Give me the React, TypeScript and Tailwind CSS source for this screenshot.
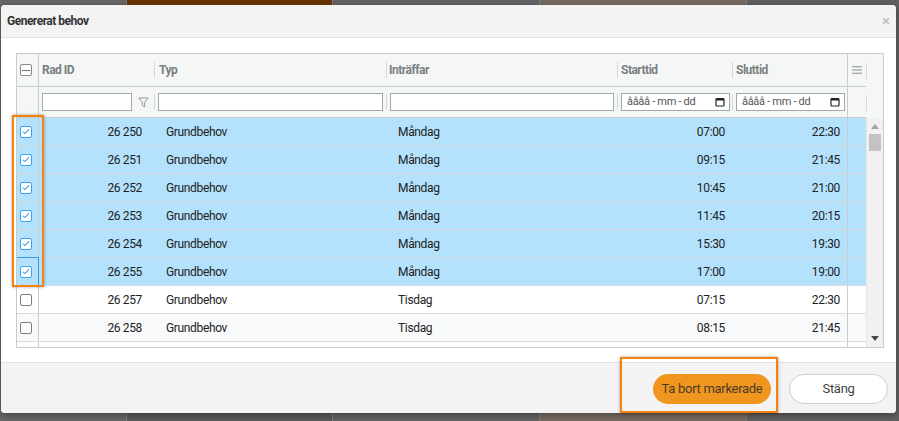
import React from "react";

interface Row {
  id: string;
  day: string;
  start: string;
  end: string;
  selected: boolean;
}

const rows: Row[] = [
  { id: "26 250", day: "Måndag", start: "07:00", end: "22:30", selected: true },
  { id: "26 251", day: "Måndag", start: "09:15", end: "21:45", selected: true },
  { id: "26 252", day: "Måndag", start: "10:45", end: "21:00", selected: true },
  { id: "26 253", day: "Måndag", start: "11:45", end: "20:15", selected: true },
  { id: "26 254", day: "Måndag", start: "15:30", end: "19:30", selected: true },
  { id: "26 255", day: "Måndag", start: "17:00", end: "19:00", selected: true },
  { id: "26 257", day: "Tisdag", start: "07:15", end: "22:30", selected: false },
  { id: "26 258", day: "Tisdag", start: "08:15", end: "21:45", selected: false },
];

const font = { fontFamily: "Roboto, 'Noto Sans', sans-serif" };

function Checkbox({ checked }: { checked: boolean }) {
  if (!checked) {
    return <span className="block h-[12px] w-[12px] rounded-[2px] border border-[#7d7d7d] bg-white" />;
  }
  return (
    <span className="flex h-[12px] w-[12px] items-center justify-center rounded-[2px] border border-[#3d9ff0] bg-white">
      <svg width="8" height="7" viewBox="0 0 8 7" fill="none">
        <path d="M1 3.8 L3 5.6 L7 1.2" stroke="#3d9ff0" strokeWidth="1.1" />
      </svg>
    </span>
  );
}

function Sep() {
  return <span className="h-[16px] w-px shrink-0 bg-[#d6d9db]" />;
}

function DateBox() {
  return (
    <div className="flex h-[18px] w-[109px] items-center justify-between border border-[#9ea8ad] bg-white pl-[5px] pr-[4px] text-[11px] tracking-[-0.3px] text-[#555]">
      <span>åååå - mm - dd</span>
      <svg width="10" height="10" viewBox="0 0 10 10" fill="none">
        <rect x="1" y="1.5" width="8" height="7.5" rx="1" stroke="#222" strokeWidth="1.2" />
        <rect x="1" y="1.5" width="8" height="2" fill="#222" />
      </svg>
    </div>
  );
}

function DataRow({ row, index }: { row: Row; index: number }) {
  const bg = row.selected ? "bg-[#b4e1fc]" : index % 2 === 1 ? "bg-[#f8f9fb]" : "bg-white";
  const focused = index === 5;
  return (
    <div className={`flex h-[28px] shrink-0 border-b border-[#d9dcdf] text-[12px] tracking-[-0.35px] text-[#222] ${bg}`}>
      <div className="relative flex w-[22px] shrink-0 items-center border-r border-[#c6ccd0] pl-[3px]">
        <Checkbox checked={row.selected} />
        {focused && <div className="absolute -bottom-px -left-px -right-px -top-px border border-[#3b98e4]" />}
      </div>
      <div className="flex w-[115px] shrink-0 items-center justify-end pr-[12px]">{row.id}</div>
      <div className="flex w-[232px] shrink-0 items-center pl-[12px]">Grundbehov</div>
      <div className="flex w-[231px] shrink-0 items-center pl-[12px]">{row.day}</div>
      <div className="flex w-[115px] shrink-0 items-center justify-end pr-[7px]">{row.start}</div>
      <div className="flex w-[115px] shrink-0 items-center justify-end pr-[7px]">{row.end}</div>
      <div className="w-[19px] shrink-0 border-l border-[#c6ccd0]" />
    </div>
  );
}

function Grid() {
  return (
    <div className="flex h-[295px] w-[868px] flex-col border border-[#c6ccd0] bg-white">
      {/* header + filter */}
      <div className="flex shrink-0 bg-[#f5f6f6]">
        <div className="flex w-[849px] flex-col">
          <div className="flex h-[33px] border-b border-[#c6ccd0] text-[12px] font-bold tracking-[-0.5px] text-[#7b7f82]">
            <div className="flex w-[22px] shrink-0 items-center border-r border-[#c6ccd0] pl-[3px]">
              <span className="flex h-[12px] w-[12px] items-center justify-center rounded-[2px] border border-[#8a8a8a] bg-white">
                <span className="h-px w-[8px] bg-[#777]" />
              </span>
            </div>
            <div className="flex w-[115px] shrink-0 items-center pl-[3px]">Rad ID</div>
            <div className="flex w-[232px] shrink-0 items-center gap-[4px]">
              <Sep />
              Typ
            </div>
            <div className="flex w-[231px] shrink-0 items-center gap-[2px]">
              <Sep />
              Inträffar
            </div>
            <div className="flex w-[115px] shrink-0 items-center gap-[3px]">
              <Sep />
              Starttid
            </div>
            <div className="flex w-[115px] shrink-0 items-center gap-[3px]">
              <Sep />
              Sluttid
            </div>
            <div className="flex w-[19px] shrink-0 items-center justify-center border-l border-[#c6ccd0]">
              <svg width="10" height="8" viewBox="0 0 10 8">
                <rect x="0" y="0" width="10" height="1.4" fill="#a9adb0" />
                <rect x="0" y="3.3" width="10" height="1.4" fill="#a9adb0" />
                <rect x="0" y="6.6" width="10" height="1.4" fill="#a9adb0" />
              </svg>
            </div>
          </div>
          <div className="flex h-[31px] border-b border-[#c6ccd0]">
            <div className="w-[22px] shrink-0 border-r border-[#c6ccd0]" />
            <div className="flex w-[115px] shrink-0 items-center pl-[3px]">
              <div className="h-[18px] w-[90px] border border-[#9ea8ad] bg-white" />
              <svg className="ml-[6px]" width="11" height="11" viewBox="0 0 11 11" fill="none">
                <path d="M0.8 1 H10.2 L6.6 5.2 V10 L4.4 8.6 V5.2 Z" stroke="#8a8f92" strokeWidth="0.9" />
              </svg>
            </div>
            <div className="flex w-[232px] shrink-0 items-center gap-[3px]">
              <Sep />
              <div className="h-[18px] w-[225px] border border-[#9ea8ad] bg-white" />
            </div>
            <div className="flex w-[231px] shrink-0 items-center gap-[3px]">
              <Sep />
              <div className="h-[18px] w-[224px] border border-[#9ea8ad] bg-white" />
            </div>
            <div className="flex w-[115px] shrink-0 items-center gap-[3px]">
              <Sep />
              <DateBox />
            </div>
            <div className="flex w-[115px] shrink-0 items-center gap-[3px]">
              <Sep />
              <DateBox />
            </div>
            <div className="w-[19px] shrink-0 border-l border-[#c6ccd0]" />
          </div>
        </div>
        <div className="flex w-[17px] flex-col">
          <div className="flex h-[33px] items-center">
            <Sep />
          </div>
          <div className="flex h-[31px] items-center">
            <Sep />
          </div>
        </div>
      </div>
      {/* body */}
      <div className="flex min-h-0 flex-1">
        <div className="flex w-[849px] flex-col overflow-hidden">
          {rows.map((row, i) => (
            <DataRow key={row.id} row={row} index={i} />
          ))}
          <div className="flex flex-1">
            <div className="w-[22px] border-r border-[#c6ccd0]" />
            <div className="ml-[808px] w-[19px] border-l border-[#c6ccd0]" />
          </div>
        </div>
        <div className="flex w-[17px] flex-col items-center justify-between border-l border-[#e6e6e6] bg-[#f1f1f1] pb-[6px] pt-[6px]">
          <div className="flex flex-col items-center gap-[5px]">
            <svg width="8" height="5" viewBox="0 0 8 5">
              <path d="M0 5 L4 0 L8 5 Z" fill="#a3a3a3" />
            </svg>
            <div className="h-[17px] w-[12px] bg-[#c3c3c3]" />
          </div>
          <svg width="8" height="5" viewBox="0 0 8 5">
            <path d="M0 0 L8 0 L4 5 Z" fill="#4a4a4a" />
          </svg>
        </div>
      </div>
    </div>
  );
}

export default function App() {
  return (
    <div className="relative h-[421px] w-[899px] overflow-hidden bg-[#5d5d5d]" style={font}>
      {/* page behind the dialog */}
      <div className="flex h-full">
        <div className="w-[127px] border-r border-[#7a7a7a] bg-[#666]" />
        <div className="flex w-[206px] flex-col border-r border-[#7a7a7a] bg-[#5a5a5a]">
          <div className="h-[14px] bg-[#6a3402]" />
        </div>
        <div className="w-[207px] border-r border-[#7a7a7a] bg-[#636363]" />
        <div className="w-[207px] border-r border-[#7a7a7a] bg-[#756a5f]" />
        <div className="flex-1 bg-[#606060]" />
      </div>

      {/* dialog */}
      <div className="absolute left-[1px] top-[5px] flex h-[408px] w-[895px] flex-col overflow-hidden rounded-[4px] bg-white shadow-[0_2px_6px_rgba(0,0,0,0.35)]">
        <div className="flex h-[33px] shrink-0 items-center justify-between border-b border-[#e2e2e2] bg-[#f3f3f3] pl-[6px] pr-[6px]">
          <span className="text-[12px] font-bold tracking-[-0.5px] text-[#333]">Genererat behov</span>
          <span className="text-[15px] leading-none text-[#bcbcbc]">×</span>
        </div>
        <div className="shrink-0 px-[15px] pb-[14px] pt-[15px]">
          <Grid />
        </div>
        <div className="flex flex-1 items-start justify-end gap-[18px] border-t border-[#e2e2e2] bg-[#f3f3f3] pr-[8px] pt-[11px]">
          <button className="h-[30px] w-[118px] rounded-full bg-[#f0961f] text-[13px] tracking-[-0.3px] text-[#4a3a28]">
            Ta bort markerade
          </button>
          <button className="h-[30px] w-[99px] rounded-full border border-[#cfcfcf] bg-white text-[13px] tracking-[-0.3px] text-[#444]">
            Stäng
          </button>
        </div>
      </div>

      {/* orange annotation frames */}
      <div className="absolute left-[12px] top-[115px] h-[172px] w-[32px] border-2 border-[#f6830f] shadow-[0_0_3px_rgba(0,0,0,0.35)]" />
      <div className="absolute left-[620px] top-[357px] h-[56px] w-[158px] border-2 border-[#f6830f] shadow-[0_0_3px_rgba(0,0,0,0.35)]" />
    </div>
  );
}
